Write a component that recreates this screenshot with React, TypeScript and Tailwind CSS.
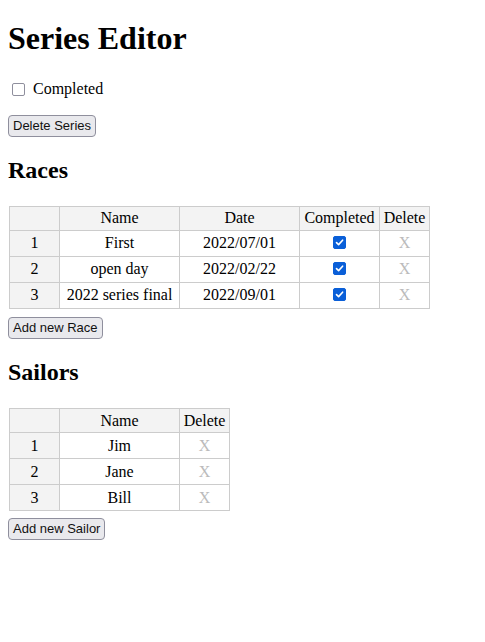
import React, { useState } from "react";

const serif = { fontFamily: '"Liberation Serif", "Times New Roman", serif' };

function Check({ checked, onChange, className = "" }: { checked: boolean; onChange: () => void; className?: string }) {
  return (
    <span
      role="checkbox"
      aria-checked={checked}
      onClick={onChange}
      className={
        "h-[13px] w-[13px] items-center justify-center rounded-[2px] cursor-default " +
        (checked ? "bg-[#0a5fd8] border border-[#0a5fd8]" : "bg-white border-[1.5px] border-[#8f8f9d]") +
        " " +
        className
      }
    >
      {checked && (
        <svg width="9" height="9" viewBox="0 0 9 9">
          <path d="M1.5 4.6 L3.6 6.6 L7.6 2.2" fill="none" stroke="white" strokeWidth="1.6" strokeLinecap="round" strokeLinejoin="round" />
        </svg>
      )}
    </span>
  );
}

function Btn({ children, onClick }: { children: React.ReactNode; onClick?: () => void }) {
  return (
    <button
      onClick={onClick}
      className="block h-[22px] rounded-[4px] border border-[#8f8f9d] bg-[#e9e9ed] px-[4px] text-[13px] leading-[18px] text-[#111111]"
      style={{ fontFamily: '"Liberation Sans", Arial, sans-serif' }}
    >
      {children}
    </button>
  );
}

const th = "h-[24px] border-r border-b border-[#cccccc] bg-[#f3f3f3] p-0 text-center font-normal align-middle";
const rh = "h-[26px] border-r border-b border-[#cccccc] bg-[#f3f3f3] p-0 text-center align-middle";
const td = "h-[26px] border-r border-b border-[#cccccc] bg-white p-0 text-center align-middle";

export default function App() {
  const [done, setDone] = useState(false);
  const [races, setRaces] = useState([
    { name: "First", date: "2022/07/01", c: true },
    { name: "open day", date: "2022/02/22", c: true },
    { name: "2022 series final", date: "2022/09/01", c: true },
  ]);
  const sailors = ["Jim", "Jane", "Bill"];

  return (
    <div className="px-2 text-[16px] leading-[normal] text-black" style={serif}>
      <h1 className="mt-[20px] mb-[22.44px] text-[32px] font-bold leading-[normal]">Series Editor</h1>
      <p className="mb-[17px] h-[19px] leading-[19px]">
        <Check checked={done} onChange={() => setDone(!done)} className="inline-flex align-[-2px] ml-[4px] mr-[4px]" /> Completed
      </p>
      <Btn>Delete Series</Btn>

      <h2 className="mt-[19.92px] mb-[21.5px] text-[24px] font-bold leading-[normal]">Races</h2>
      <table className="ml-px table-fixed border-separate border-spacing-0 border-l border-t border-[#cccccc]">
        <thead>
          <tr>
            <th className={th + " w-[50px]"}></th>
            <th className={th + " w-[120px]"}>Name</th>
            <th className={th + " w-[120px]"}>Date</th>
            <th className={th + " w-[80px]"}>Completed</th>
            <th className={th + " w-[50px]"}>Delete</th>
          </tr>
        </thead>
        <tbody>
          {races.map((r, i) => (
            <tr key={i}>
              <td className={rh}>{i + 1}</td>
              <td className={td}>{r.name}</td>
              <td className={td}>{r.date}</td>
              <td className={td}>
                <Check
                  checked={r.c}
                  onChange={() => setRaces(races.map((x, j) => (j === i ? { ...x, c: !x.c } : x)))}
                  className="mx-auto mt-[-1px] flex"
                />
              </td>
              <td className={td + " text-[#bbbbbb]"}>X</td>
            </tr>
          ))}
        </tbody>
      </table>
      <div className="mt-[8px]">
        <Btn>Add new Race</Btn>
      </div>

      <h2 className="mt-[19.92px] mb-[22.5px] text-[24px] font-bold leading-[normal]">Sailors</h2>
      <table className="ml-px table-fixed border-separate border-spacing-0 border-l border-t border-[#cccccc]">
        <thead>
          <tr>
            <th className={th + " w-[50px]"}></th>
            <th className={th + " w-[120px]"}>Name</th>
            <th className={th + " w-[50px]"}>Delete</th>
          </tr>
        </thead>
        <tbody>
          {sailors.map((s, i) => (
            <tr key={i}>
              <td className={rh}>{i + 1}</td>
              <td className={td}>{s}</td>
              <td className={td + " text-[#bbbbbb]"}>X</td>
            </tr>
          ))}
        </tbody>
      </table>
      <div className="mt-[7px]">
        <Btn>Add new Sailor</Btn>
      </div>
    </div>
  );
}
